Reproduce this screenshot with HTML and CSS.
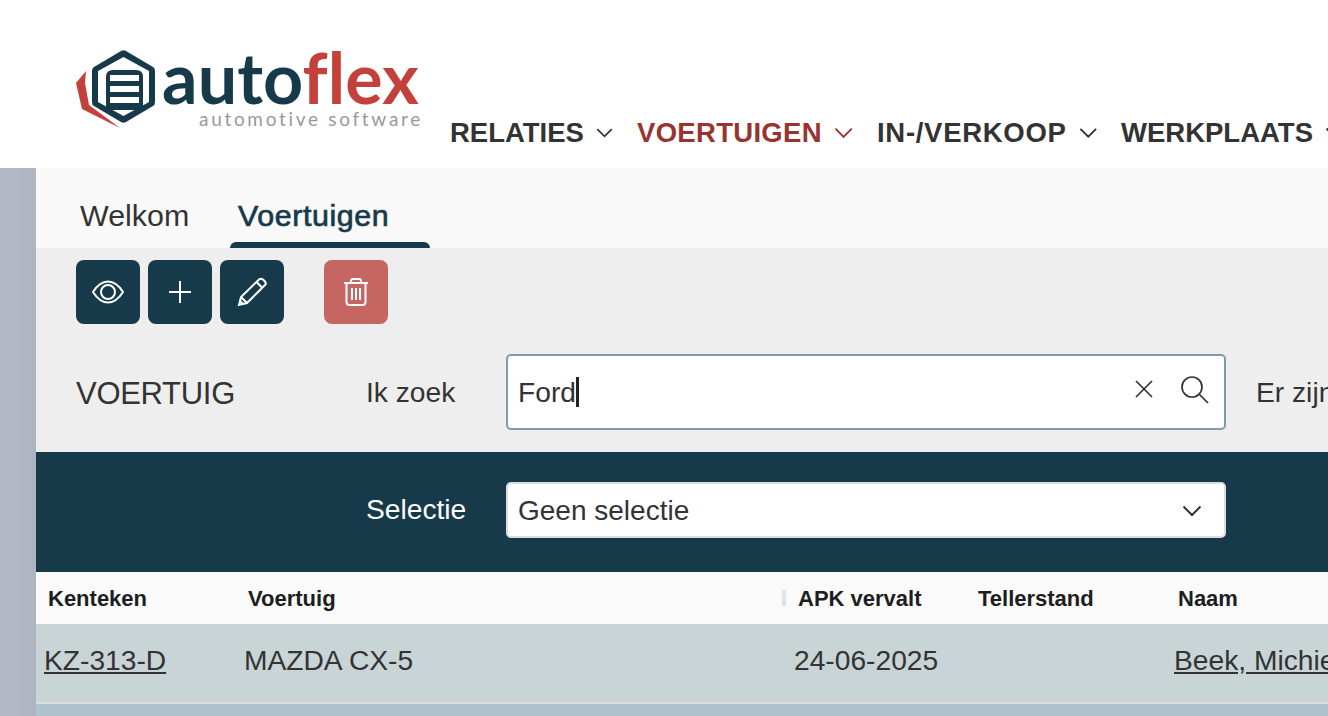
FILE: index.html
```html
<!DOCTYPE html>
<html lang="nl">
<head>
    <meta charset="UTF-8">
    <title>Autoflex - Voertuigen</title>
    <link rel="stylesheet" href="styles.css">
</head>
<body>
    <header class="topbar">
        <div class="logo">
            <svg class="logo-mark" viewBox="0 0 90 80" width="90" height="80">
                <path fill="#c4403a" d="M10 21 L0 33 L6 59 L44 78 L36 72 L13 55 L9 33 Z"/>
                <path fill="#173a4a" d="M45 1 Q47.500 -0.500 50 1 L77 17 Q79 18 79 21 L79 52 Q79 55 77 56 L50 72 Q47.500 73.500 45 72 L18 56 Q16 55 16 52 L16 21 Q16 18 18 17 Z"/>
                <path fill="#fff" d="M47.500 7 L73 21 L73 52 L47.500 66 L22 52 L22 21 Z"/>
                <path fill="#173a4a" d="M30 27 Q30 20 37 20 L60 20 Q67 20 67 27 L67 60 L30 60 Z"/>
                <path fill="#fff" d="M34 25 H63 V31 H34 Z M34 36 H63 V42 H34 Z M34 47 H63 V53 H34 Z"/>
            </svg>
            <div class="logo-text">
                <div class="logo-name">auto<span class="logo-red">flex</span></div>
                <div class="logo-sub">automotive software</div>
            </div>
        </div>
        <nav class="menu">
            <a class="menu-item"><span>RELATIES</span> <svg class="chev" viewBox="0 0 20 12" width="20" height="12"><path d="M1.500 1.500 L10 10 L18.500 1.500"/></svg></a>
            <a class="menu-item active"><span>VOERTUIGEN</span> <svg class="chev" viewBox="0 0 20 12" width="20" height="12"><path d="M1.500 1.500 L10 10 L18.500 1.500"/></svg></a>
            <a class="menu-item wide"><span>IN-/VERKOOP</span> <svg class="chev" viewBox="0 0 20 12" width="20" height="12"><path d="M1.500 1.500 L10 10 L18.500 1.500"/></svg></a>
            <a class="menu-item"><span>WERKPLAATS</span> <svg class="chev" viewBox="0 0 20 12" width="20" height="12"><path d="M1.500 1.500 L10 10 L18.500 1.500"/></svg></a>
        </nav>
    </header>

    <div class="layout">
        <aside class="rail"></aside>
        <main class="content">
            <div class="tabs">
                <a class="tab">Welkom</a>
                <a class="tab tab-active">Voertuigen</a>
            </div>

            <section class="panel">
                <div class="toolbar">
                    <button class="btn">
                        <svg viewBox="0 0 32 32" width="32" height="32"><path d="M1 16 C6 8 11 5.500 16 5.500 C21 5.500 26 8 31 16 C26 24 21 26.500 16 26.500 C11 26.500 6 24 1 16 Z"/><circle cx="16" cy="16" r="7"/></svg>
                    </button>
                    <button class="btn">
                        <svg viewBox="0 0 32 32" width="32" height="32"><path d="M16 5 V27 M5 16 H27"/></svg>
                    </button>
                    <button class="btn">
                        <svg viewBox="0 0 32 32" width="32" height="32"><path d="M3 29 L5 21 L23 3.500 Q25 2 27 3.500 L29 5.500 Q30.500 7.500 29 9 L11 27 Z M5 21 L11 27 M20.500 6 L26.500 12 M4 25 L7 28"/></svg>
                    </button>
                    <button class="btn btn-delete">
                        <svg viewBox="0 0 32 32" width="32" height="32"><path d="M4 7 H28 M11 6.500 V5 Q11 3 13 3 H19 Q21 3 21 5 V6.500 M6.500 7 V26 Q6.500 29 9.500 29 H22.500 Q25.500 29 25.500 26 V7 M12 12 V24 M16 12 V24 M20 12 V24"/></svg>
                    </button>
                </div>

                <div class="search-row">
                    <div class="entity">VOERTUIG</div>
                    <label class="field-label">Ik zoek</label>
                    <div class="search-box">
                        <span class="search-value">Ford</span><span class="caret"></span>
                        <svg class="clear-icon" viewBox="0 0 20 20" width="20" height="20"><path d="M2 2 L18 18 M18 2 L2 18"/></svg>
                        <svg class="search-icon" viewBox="0 0 30 30" width="30" height="30"><circle cx="12" cy="12" r="10"/><path d="M19.500 19.500 L28 28"/></svg>
                    </div>
                    <div class="result-count">Er zijn 1 resultaten gevonden</div>
                </div>
            </section>

            <section class="filter-band">
                <label class="filter-label">Selectie</label>
                <div class="select-box">
                    <span>Geen selectie</span>
                    <svg class="select-chev" viewBox="0 0 20 12" width="20" height="12"><path d="M1.500 1.500 L10 10 L18.500 1.500"/></svg>
                </div>
            </section>

            <div class="grid-head">
                <div class="col">Kenteken</div>
                <div class="col col-sort">Voertuig</div>
                <div class="col">APK vervalt</div>
                <div class="col">Tellerstand</div>
                <div class="col">Naam</div>
            </div>
            <div class="grid-row">
                <div class="cell"><a class="link">KZ-313-D</a></div>
                <div class="cell">MAZDA CX-5</div>
                <div class="cell">24-06-2025</div>
                <div class="cell"></div>
                <div class="cell"><a class="link">Beek, Michiel</a></div>
            </div>
            <div class="grid-row-next"></div>
        </main>
    </div>
</body>
</html>
```

FILE: styles.css
```css
html, body {
    height: 100%;
    overflow: hidden;
}
body {
    margin: 0;
    width: 1600px;
    font-family: "Liberation Sans", Arial, sans-serif;
    color: #333;
    background-color: #fff;
}
.topbar {
    height: 168px;
    padding-left: 76px;
    display: flex;
    background-color: #fff;
}
.logo {
    display: flex;
    width: 374px;
    padding-top: 50px;
    box-sizing: border-box;
}
.logo-mark {
    flex: none;
    margin-right: -4px;
}
.logo-text {
    margin-top: -5px;
}
.logo-name {
    font-family: Lato, sans-serif;
    font-weight: 700;
    font-size: 70px;
    line-height: 64px;
    color: #173a4a;
    letter-spacing: 0.1px;
}
.logo-red {
    color: #c4403a;
}
.logo-sub {
    font-family: Lato, sans-serif;
    font-size: 19px;
    line-height: 18px;
    letter-spacing: 2.700px;
    color: #999;
    margin-left: 37px;
    margin-top: 1px;
    white-space: nowrap;
}
.menu {
    display: grid;
    grid-template-columns: 187px 240px 244px auto;
    padding-top: 116px;
    align-items: start;
}
.menu-item {
    display: flex;
    align-items: center;
    justify-content: space-between;
    padding-right: 24px;
    font-size: 27.500px;
    line-height: 34px;
    font-weight: 700;
    color: #333;
    white-space: nowrap;
}
.menu-item.active {
    color: #993330;
    letter-spacing: 0.3px;
}
.menu-item.wide {
    letter-spacing: 0.7px;
}
.chev {
    fill: none;
    stroke: currentColor;
    stroke-width: 2;
    margin-left: 12px;
}
.layout {
    display: flex;
    height: 548px;
}
.rail {
    width: 36px;
    flex: none;
    background: linear-gradient(90deg, #b3b9c6, #aeb5c1);
}
.content {
    flex: 1;
    background-color: #fff;
}
.tabs {
    height: 80px;
    box-sizing: border-box;
    padding-left: 44px;
    display: flex;
    background-color: #f9f9f9;
}
.tab {
    width: 158px;
    font-size: 30.400px;
    line-height: 34px;
    padding-top: 30px;
    color: #333;
}
.tab-active {
    position: relative;
    color: #173a4a;
    -webkit-text-stroke: 0.7px #173a4a;
    letter-spacing: 0.6px;
}
.tab-active::after {
    content: "";
    position: absolute;
    left: -8px;
    width: 200px;
    bottom: 0;
    height: 6px;
    background-color: #173a4a;
    border-radius: 6px 6px 0 0;
}
.panel {
    height: 204px;
    box-sizing: border-box;
    padding: 12px 0 0 40px;
    background-color: #eee;
}
.toolbar {
    display: flex;
    gap: 8px;
}
.btn {
    width: 64px;
    height: 64px;
    padding: 0;
    border: 0;
    border-radius: 8px;
    background-color: #173a4a;
    display: flex;
    align-items: center;
    justify-content: center;
}
.btn svg {
    fill: none;
    stroke: #fff;
    stroke-width: 2;
}
.btn-delete {
    margin-left: 32px;
    background-color: #c56663;
}
.search-row {
    display: flex;
    align-items: center;
    margin-top: 30px;
}
.entity {
    width: 290px;
    flex: none;
    padding-top: 3px;
    font-size: 31px;
    letter-spacing: -0.3px;
}
.field-label {
    width: 140px;
    flex: none;
    padding-top: 1px;
    font-size: 28.200px;
}
.search-box {
    width: 720px;
    height: 76px;
    flex: none;
    box-sizing: border-box;
    border: 2px solid #7f9ba6;
    border-radius: 5px;
    background-color: #fff;
    display: flex;
    align-items: center;
    padding: 0 0 0 10px;
    font-size: 28.200px;
}
.caret {
    width: 3px;
    height: 30px;
    background-color: #222;
}
.clear-icon {
    margin-left: auto;
    margin-top: -7px;
    fill: none;
    stroke: #333;
    stroke-width: 1.700;
}
.search-icon {
    margin-left: 26px;
    margin-right: 14px;
    margin-top: -4px;
    fill: none;
    stroke: #333;
    stroke-width: 1.700;
}
.result-count {
    margin-left: 30px;
    padding-top: 1px;
    font-size: 28.200px;
    white-space: nowrap;
}
.filter-band {
    height: 120px;
    box-sizing: border-box;
    padding: 30px 0 0 330px;
    display: flex;
    background-color: #173a4a;
}
.filter-label {
    width: 140px;
    flex: none;
    font-size: 28.200px;
    line-height: 55px;
    color: #fff;
}
.select-box {
    width: 720px;
    height: 56px;
    box-sizing: border-box;
    border: 2px solid #ddd;
    border-radius: 5px;
    background-color: #fff;
    display: flex;
    align-items: center;
    justify-content: space-between;
    padding: 1px 22px 0 10px;
    font-size: 28px;
}
.select-chev {
    fill: none;
    stroke: #333;
    stroke-width: 2;
}
.grid-head, .grid-row {
    display: grid;
    grid-template-columns: 200px 550px 180px 200px 1fr;
}
.grid-head {
    height: 52px;
    background-color: #fafafa;
    font-size: 22px;
    font-weight: 700;
    line-height: 54px;
    color: #1c1e21;
}
.col {
    padding-left: 12px;
}
.col-sort {
    position: relative;
}
.col-sort::after {
    content: "";
    position: absolute;
    right: 0;
    top: 18px;
    width: 4px;
    height: 16px;
    background-color: #e0e4ee;
}
.grid-row {
    height: 80px;
    box-sizing: border-box;
    border-bottom: 2px solid #ddd;
    background-color: #c9d4d6;
    font-size: 28.200px;
    line-height: 72px;
}
.cell {
    padding-left: 8px;
    white-space: nowrap;
}
.link {
    text-decoration: underline;
}
.grid-row-next {
    height: 12px;
    background-color: #aec3d0;
}
```
